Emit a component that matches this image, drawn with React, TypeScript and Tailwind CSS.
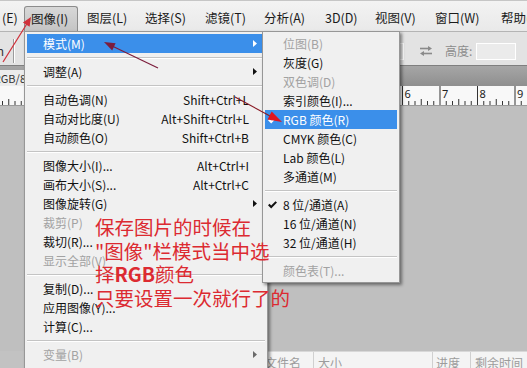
import React from "react";

type MI = {
  sep?: boolean;
  label?: string;
  sc?: string;
  arrow?: boolean;
  dis?: boolean;
  hi?: boolean;
  check?: boolean;
  bold?: boolean;
};

const mainItems: MI[] = [
  { label: "模式(M)", arrow: true, hi: true },
  { sep: true },
  { label: "调整(A)", arrow: true },
  { sep: true },
  { label: "自动色调(N)", sc: "Shift+Ctrl+L" },
  { label: "自动对比度(U)", sc: "Alt+Shift+Ctrl+L" },
  { label: "自动颜色(O)", sc: "Shift+Ctrl+B" },
  { sep: true },
  { label: "图像大小(I)...", sc: "Alt+Ctrl+I" },
  { label: "画布大小(S)...", sc: "Alt+Ctrl+C" },
  { label: "图像旋转(G)", arrow: true },
  { label: "裁剪(P)", dis: true },
  { label: "裁切(R)..." },
  { label: "显示全部(V)", dis: true },
  { sep: true },
  { label: "复制(D)..." },
  { label: "应用图像(Y)..." },
  { label: "计算(C)..." },
  { sep: true },
  { label: "变量(B)", arrow: true, dis: true },
  { label: "应用数据组(L)...", dis: true },
];

const subItems: MI[] = [
  { label: "位图(B)", dis: true },
  { label: "灰度(G)" },
  { label: "双色调(D)", dis: true },
  { label: "索引颜色(I)..." },
  { label: "RGB 颜色(R)", hi: true, check: true },
  { label: "CMYK 颜色(C)" },
  { label: "Lab 颜色(L)" },
  { label: "多通道(M)" },
  { sep: true },
  { label: "8 位/通道(A)", check: true },
  { label: "16 位/通道(N)" },
  { label: "32 位/通道(H)" },
  { sep: true },
  { label: "颜色表(T)...", dis: true },
];

function Tri({ color }: { color: string }) {
  return (
    <svg width="4" height="7" viewBox="0 0 4 7">
      <polygon points="0,0 4,3.5 0,7" fill={color} />
    </svg>
  );
}

function Check({ color }: { color: string }) {
  return (
    <svg width="9" height="8" viewBox="0 0 9 8">
      <path d="M0 4.2 L1.5 2.8 L3.2 4.5 L7.5 0.2 L9 1.6 L3.2 7.4 Z" fill={color} />
    </svg>
  );
}

function Sep() {
  return (
    <div className="h-[9px] flex flex-col justify-center">
      <div className="h-px bg-[#c4c4c4]" />
      <div className="h-px bg-white" />
    </div>
  );
}

function MainRow({ it }: { it: MI }) {
  const color = it.hi ? "text-white" : it.dis ? "text-[#a2a2a2]" : "text-[#111111]";
  const arrowColor = it.hi ? "#ffffff" : it.dis ? "#6a6a6a" : "#111111";
  return (
    <div
      className={`h-[19px] flex items-center pl-[16px] pr-[8px] text-[12px] leading-none whitespace-nowrap ${
        it.hi ? "bg-[#3b8fea]" : ""
      } ${color}`}
    >
      <span>{it.label}</span>
      <span className="ml-auto">{it.sc}</span>
      <span className="w-[8px] flex justify-end">{it.arrow && <Tri color={arrowColor} />}</span>
    </div>
  );
}

function SubRow({ it }: { it: MI }) {
  const color = it.hi ? "text-white" : it.dis ? "text-[#a2a2a2]" : "text-[#111111]";
  return (
    <div
      className={`h-[19px] flex items-center pl-[3px] text-[12px] leading-none whitespace-nowrap ${
        it.hi ? "bg-[#3b8fea]" : ""
      } ${color}`}
    >
      <span className="w-[15px] flex items-center">
        {it.check && <Check color={it.hi ? "#ffffff" : "#111111"} />}
      </span>
      <span>{it.label}</span>
    </div>
  );
}

function MenuBar() {
  const items: { label: string; w: string; pl: string; pressed?: boolean }[] = [
    { label: "(E)", w: "w-[24px]", pl: "pl-[2px]" },
    { label: "图像(I)", w: "w-[54px]", pl: "pl-[6px]", pressed: true },
    { label: "图层(L)", w: "w-[61px]", pl: "pl-[9px]" },
    { label: "选择(S)", w: "w-[60px]", pl: "pl-[6px]" },
    { label: "滤镜(T)", w: "w-[59px]", pl: "pl-[6px]" },
    { label: "分析(A)", w: "w-[61px]", pl: "pl-[6px]" },
    { label: "3D(D)", w: "w-[50px]", pl: "pl-[6px]" },
    { label: "视图(V)", w: "w-[60px]", pl: "pl-[6px]" },
    { label: "窗口(W)", w: "w-[66px]", pl: "pl-[6px]" },
    { label: "帮助(H)", w: "w-[60px]", pl: "pl-[6px]" },
  ];
  return (
    <div className="h-[32px] shrink-0 flex items-end bg-gradient-to-b from-[#f3f3f3] to-[#e9e9e9] border-t border-[#c6c6c6] border-b border-b-[#b4b4b4]">
      {items.map((it) => (
        <div
          key={it.label}
          className={`${it.w} ${it.pl} shrink-0 h-[25px] flex items-center text-[12.5px] leading-none whitespace-nowrap text-[#1a1a1a] ${
            it.pressed
              ? "bg-gradient-to-b from-[#d8d8d8] to-[#c4c4c4] border border-b-0 border-[#8c8c8c] rounded-t-[3px]"
              : ""
          }`}
        >
          {it.label}
        </div>
      ))}
    </div>
  );
}

function Toolbar() {
  return (
    <div className="h-[33px] shrink-0 bg-[#e3e3e3] flex items-center pt-[5px] text-[12px] leading-none">
      <div className="w-[4px] flex justify-end overflow-visible whitespace-nowrap text-[#333]">
        <span>n</span>
      </div>
      <div className="ml-[9px] h-[24px] w-[2px] border-l border-[#9c9c9c] border-r border-r-white" />
      <div className="ml-[345px] w-[44px] h-[17px] border border-white bg-[#ebebeb]" />
      <svg className="ml-[15px]" width="14" height="10" viewBox="0 0 14 10">
        <path d="M1 2.5 H11" stroke="#8a8a8a" strokeWidth="1.6" />
        <polygon points="9,0 13,2.5 9,5" fill="#8a8a8a" />
        <path d="M3 7.5 H13" stroke="#8a8a8a" strokeWidth="1.6" />
        <polygon points="5,5 1,7.5 5,10" fill="#8a8a8a" />
      </svg>
      <span className="ml-[12px] text-[#8c8c8c]">高度:</span>
      <div className="ml-[4px] w-[40px] h-[17px] border border-white bg-[#ebebeb]" />
    </div>
  );
}

function TabBar() {
  return (
    <div className="h-[21px] shrink-0 flex items-end bg-gradient-to-b from-[#a6a6a6] to-[#8f8f8f] border-t border-[#7f7f7f]">
      <div className="w-[200px] h-[16px] bg-[#ececec] flex items-center">
        <div className="w-[26px] flex justify-end whitespace-nowrap text-[11px] leading-none text-[#333]">
          <span>未标题-1 @ 100%(RGB/8</span>
        </div>
      </div>
    </div>
  );
}

function Ruler() {
  const majors: number[] = [];
  for (let k = -11; k <= 3; k++) majors.push(402.5 + 37.5 * k);
  const minors: number[] = [];
  majors.forEach((m) => {
    for (let j = 1; j < 6; j++) minors.push(m + 6.25 * j);
  });
  return (
    <div className="h-[20px] shrink-0 bg-[#f8f8f8] border-b border-[#9a9a9a]">
      <svg width="527" height="19" viewBox="0 0 527 19">
        {majors.map((x) => (
          <line key={"M" + x} x1={x} y1="0" x2={x} y2="19" stroke="#333" strokeWidth="1" />
        ))}
        {minors.map((x, i) => (
          <line
            key={"m" + x}
            x1={x}
            y1={i % 5 === 2 ? 13 : 15}
            x2={x}
            y2="19"
            stroke="#333"
            strokeWidth="1"
          />
        ))}
        {[6, 7, 8, 9].map((n, i) => (
          <text
            key={n}
            x={402.5 + 37.5 * i + 2}
            y="12"
            fontSize="11"
            fill="#222"
            fontFamily="'Noto Sans', sans-serif"
          >
            {n}
          </text>
        ))}
      </svg>
    </div>
  );
}

function BottomPanel() {
  return (
    <div className="h-[17px] shrink-0 flex text-[12px] leading-none text-[#9c9c9c]">
      <div className="w-[24px] bg-[#c2c2c2]" />
      <div className="flex-1 flex bg-[#f4f4f4] border-t border-[#d8d8d8]">
        <div className="w-[289px] pl-[241px] pt-[5px] whitespace-nowrap">文件名</div>
        <div className="w-[119px] pl-[4px] pt-[5px] border-l border-[#d0d0d0]">大小</div>
        <div className="w-[38px] pl-[3px] pt-[5px] border-l border-[#d0d0d0]">进度</div>
        <div className="flex-1 pl-[4px] pt-[5px] border-l border-[#d0d0d0] whitespace-nowrap">剩余时间</div>
      </div>
    </div>
  );
}

function MainMenu() {
  return (
    <div className="absolute left-[24px] top-[31px] w-[244px] bg-[#f0f0f0] border border-[#979797] p-[2px] shadow-[2px_2px_3px_rgba(0,0,0,0.45)] z-10">
      {mainItems.map((it, i) => (it.sep ? <Sep key={i} /> : <MainRow key={i} it={it} />))}
    </div>
  );
}

function SubMenu() {
  return (
    <div className="absolute left-[262px] top-[31px] w-[138px] bg-[#f0f0f0] border border-[#979797] p-[2px] shadow-[2px_2px_3px_rgba(0,0,0,0.45)] z-10">
      {subItems.map((it, i) => (it.sep ? <Sep key={i} /> : <SubRow key={i} it={it} />))}
    </div>
  );
}

function Annotation() {
  return (
    <>
      <div className="absolute left-[95px] top-[215px] z-20 text-[19.5px] leading-[23.5px] text-[#dc2a31] whitespace-nowrap">
        <div>保存图片的时候在</div>
        <div>"图像"栏模式当中选</div>
        <div>
          择<span className="font-bold">RGB</span>颜色
        </div>
        <div>只要设置一次就行了的</div>
      </div>
      <svg className="absolute left-0 top-0 z-20 pointer-events-none" width="527" height="368" viewBox="0 0 527 368">
        <line x1="3" y1="62" x2="28" y2="22" stroke="#d0303a" strokeWidth="1.2" />
        <polygon points="31,17 29.6,26.7 22.9,22.5" fill="#d0303a" />
        <line x1="158" y1="68" x2="110" y2="45" stroke="#7c1d3c" strokeWidth="1.2" />
        <polygon points="104,42 115.6,43.2 112.2,50.4" fill="#7c1d3c" />
        <line x1="235" y1="97" x2="270" y2="116" stroke="#8a1a24" strokeWidth="1.1" />
        <polygon points="282,122 267.5,119.4 271.7,111.4" fill="#e0141e" />
      </svg>
    </>
  );
}

export default function App() {
  return (
    <div className="relative w-[527px] h-[368px] overflow-hidden flex flex-col bg-[#bfbfbf] font-['Noto_Sans_CJK_SC','Noto_Sans',sans-serif]">
      <MenuBar />
      <Toolbar />
      <TabBar />
      <Ruler />
      <div className="h-[245px] shrink-0 bg-[#bfbfbf]" />
      <BottomPanel />
      <MainMenu />
      <SubMenu />
      <Annotation />
    </div>
  );
}
